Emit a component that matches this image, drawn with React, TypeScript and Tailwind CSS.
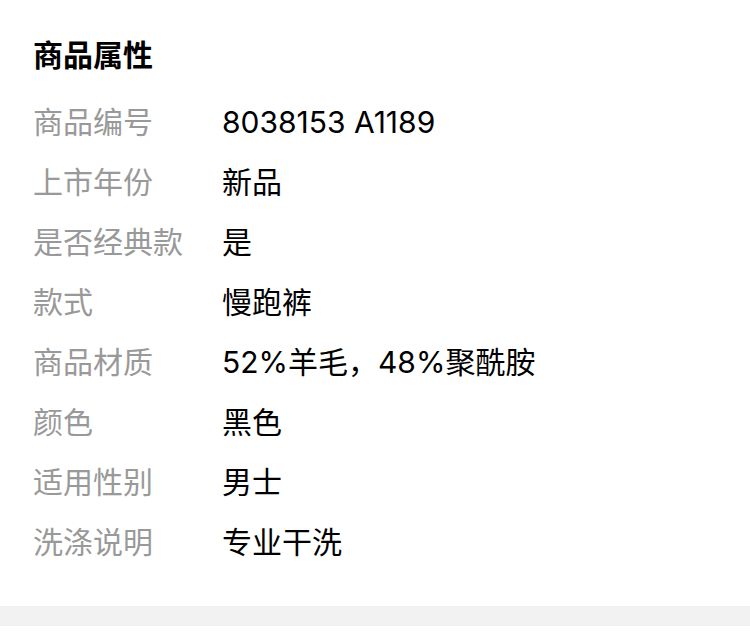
export default function App() {
  const rows: [string, string][] = [
    ["商品编号", "8038153 A1189"],
    ["上市年份", "新品"],
    ["是否经典款", "是"],
    ["款式", "慢跑裤"],
    ["商品材质", "52%羊毛，48%聚酰胺"],
    ["颜色", "黑色"],
    ["适用性别", "男士"],
    ["洗涤说明", "专业干洗"],
  ];
  return (
    <div className="w-[750px] h-[640px] bg-white flex flex-col" style={{ fontFamily: 'Inter, "Noto Sans CJK SC", sans-serif' }}>
      <div className="px-[33px] pt-[35px] h-[606px]">
        <div className="text-[30px] font-bold text-black leading-[40px] h-[40px]">商品属性</div>
        <div className="mt-[17px] flex flex-col">
          {rows.map(([k, v]) => (
            <div key={k} className="flex items-center h-[60px] text-[30px] leading-[60px]">
              <div className="w-[189px] text-[#999999]">{k}</div>
              <div className="text-black">{v}</div>
            </div>
          ))}
        </div>
      </div>
      <div className="h-[20px] bg-[#f2f2f2]" />
    </div>
  );
}
